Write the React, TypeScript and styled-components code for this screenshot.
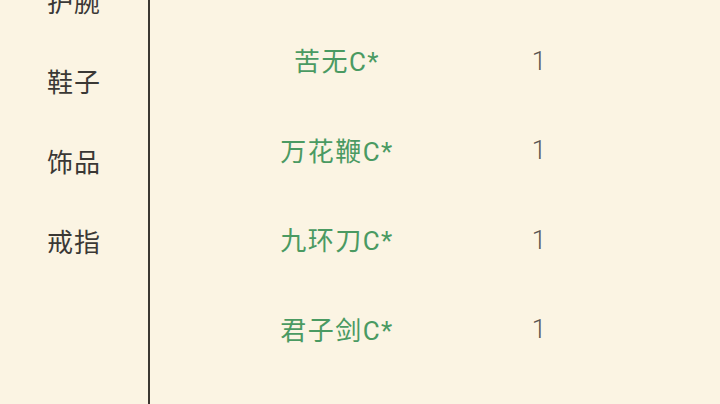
import styled, { createGlobalStyle } from "styled-components";

const GlobalStyle = createGlobalStyle`
  html, body {
    margin: 0;
    padding: 0;
    background: #fbf4e3;
    font-family: "Noto Sans CJK SC", "Noto Sans", sans-serif;
  }
`;

const Page = styled.div`
  width: 720px;
  height: 404px;
  display: flex;
  overflow: hidden;
  background: #fbf4e3;
`;

const Sidebar = styled.div`
  width: 148px;
  flex-shrink: 0;
  border-right: 2px solid #3b3731;
  overflow: hidden;
`;

const CategoryList = styled.ul`
  list-style: none;
  margin: -40px 0 0;
  padding: 0;
`;

const Category = styled.li`
  height: 80px;
  display: flex;
  align-items: center;
  justify-content: center;
  font-size: 26px;
  letter-spacing: 1px;
  color: #3a3835;
`;

const Content = styled.div`
  flex: 1;
  overflow: hidden;
  padding-top: 15px;
`;

const Row = styled.div`
  height: 89.5px;
  display: grid;
  grid-template-columns: 374px 30px 1fr;
  align-items: center;
`;

const Name = styled.span`
  text-align: center;
  font-size: 26px;
  letter-spacing: 1.5px;
  color: #4a9a62;
  font-family: "Roboto", "Noto Sans CJK SC", sans-serif;
`;

const Count = styled.span`
  text-align: center;
  font-size: 26px;
  color: #5a5753;
  font-family: "Roboto", "Noto Sans", sans-serif;
  font-weight: 300;
  padding-top: 2px;
`;

const categories = ["护腕", "鞋子", "饰品", "戒指", "", ""];

const items = [
  { name: "苦无C*", count: 1 },
  { name: "万花鞭C*", count: 1 },
  { name: "九环刀C*", count: 1 },
  { name: "君子剑C*", count: 1 },
  { name: "", count: null },
];

export default function App() {
  return (
    <>
      <GlobalStyle />
      <Page>
        <Sidebar>
          <CategoryList>
            {categories.map((c, i) => (
              <Category key={i}>{c}</Category>
            ))}
          </CategoryList>
        </Sidebar>
        <Content>
          {items.map((item, i) => (
            <Row key={i}>
              <Name>{item.name}</Name>
              <Count>{item.count}</Count>
            </Row>
          ))}
        </Content>
      </Page>
    </>
  );
}
